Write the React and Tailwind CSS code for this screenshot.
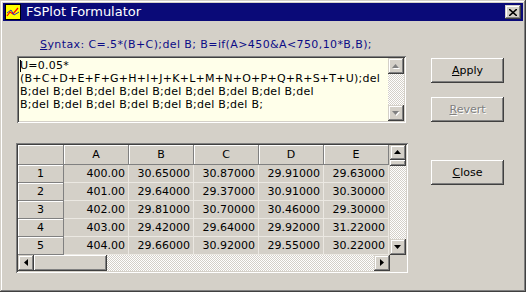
import React from 'react';

// FSPlot Formulator - classic Windows dialog
const raised =
    'shadow-[inset_-1px_-1px_#404040,inset_1px_1px_#ffffff,inset_-2px_-2px_#808080,inset_2px_2px_#d4d0c8]';
const scrollBtn =
    'shadow-[inset_-1px_-1px_#404040,inset_1px_1px_#d4d0c8,inset_-2px_-2px_#808080,inset_2px_2px_#ffffff]';
const sunken =
    'shadow-[inset_1px_1px_#808080,inset_-1px_-1px_#ffffff,inset_2px_2px_#404040,inset_-2px_-2px_#d4d0c8]';
const track =
    'bg-[image:repeating-conic-gradient(#ffffff_0%_25%,#d4d0c8_0%_50%)] bg-[length:2px_2px]';

const Arrow = ({ dir, gray }) => {
    const pts = {
        up: '3.5,0 7,4 0,4',
        down: '0,0 7,0 3.5,4',
        left: '4,0 4,7 0,3.5',
        right: '0,0 4,3.5 0,7',
    }[dir];
    const vertical = dir === 'up' || dir === 'down';
    return (
        <svg width={vertical ? 8 : 5} height={vertical ? 5 : 8} className="block">
            {gray && (
                <polygon points={pts} fill="#ffffff" transform="translate(1,1)" />
            )}
            <polygon points={pts} fill={gray ? '#808080' : '#000000'} />
        </svg>
    );
};

const ScrollButton = ({ dir, gray, className = '' }) => (
    <div className={`bg-[#d4d0c8] flex items-center justify-center ${scrollBtn} ${className}`}>
        <Arrow dir={dir} gray={gray} />
    </div>
);

const AppIcon = () => (
    <svg width="16" height="16" viewBox="0 0 16 16" className="block">
        <rect x="0.5" y="0.5" width="15" height="15" fill="#ffff00" stroke="#000000" />
        <polyline points="2,12 5,8 8,10 13,4" fill="none" stroke="#ff0000" strokeWidth="1.2" />
        <polyline points="2,9 6,6 9,11 14,8" fill="none" stroke="#3030c0" strokeWidth="1" />
    </svg>
);

const formulaLines = [
    'U=0.05*',
    '(B+C+D+E+F+G+H+I+J+K+L+M+N+O+P+Q+R+S+T+U);del',
    'B;del B;del B;del B;del B;del B;del B;del B;del B;del',
    'B;del B;del B;del B;del B;del B;del B;del B;',
];

const columns = ['A', 'B', 'C', 'D', 'E'];
const rows = [
    ['1', '400.00', '30.65000', '30.87000', '29.91000', '29.63000'],
    ['2', '401.00', '29.64000', '29.37000', '30.91000', '30.30000'],
    ['3', '402.00', '29.81000', '30.70000', '30.46000', '29.30000'],
    ['4', '403.00', '29.42000', '29.64000', '29.92000', '31.22000'],
    ['5', '404.00', '29.66000', '30.92000', '29.55000', '30.22000'],
];

const fixedCell =
    'bg-[#d4d0c8] border-r border-b border-[#808080] shadow-[inset_1px_1px_#ffffff] flex items-center justify-center';

const DialogButton = ({ children, disabled }) => (
    <div
        className={`w-[73px] h-[25px] bg-[#d4d0c8] flex items-center justify-center ${raised} ${
            disabled ? 'text-[#808080] [text-shadow:1px_1px_#ffffff]' : 'text-black'
        }`}
    >
        {children}
    </div>
);

export default function App() {
    return (
        <div className="w-[526px] h-[292px] bg-[#d4d0c8] p-[3px] flex flex-col shadow-[inset_-1px_-1px_#404040,inset_1px_1px_#d4d0c8,inset_-2px_-2px_#808080,inset_2px_2px_#ffffff] font-['DejaVu_Sans',sans-serif] text-[11px] leading-[13px] text-black overflow-hidden">
            {/* Title bar */}
            <div className="h-[18px] bg-[#0a0a78] flex items-center pl-[2px] pr-[2px]">
                <AppIcon />
                <span className="ml-[5px] text-white text-[13px] leading-[16px]">FSPlot Formulator</span>
                <div className={`ml-auto w-[16px] h-[14px] bg-[#d4d0c8] flex items-center justify-center ${scrollBtn}`}>
                    <svg width="8" height="7" className="block">
                        <path d="M0,0 L8,7 M8,0 L0,7" stroke="#000" strokeWidth="1.6" />
                    </svg>
                </div>
            </div>

            {/* Body */}
            <div className="flex flex-1 pl-[13px]">
                {/* Left column */}
                <div className="w-[392px] flex flex-col">
                    <div className="ml-[24px] mt-[17px] text-[#0c0c86] whitespace-nowrap tracking-[0.4px]">
                        <span className="underline">S</span>yntax: C=.5*(B+C);del B; B=if(A&gt;450&amp;A&lt;750,10*B,B);
                    </div>

                    {/* Formula editor */}
                    <div className={`ml-[1px] mt-[5px] w-[389px] h-[67px] p-[2px] ${sunken}`}>
                        <div className="w-full h-full bg-[#ffffea] flex">
                            <div className="flex-1 pl-[1px] pt-[1px] whitespace-pre relative tracking-[0.25px]">
                                <span className="absolute left-[1px] top-[2px] w-[1px] h-[12px] bg-black" />
                                {formulaLines.map((line, i) => (
                                    <div key={i}>{line}</div>
                                ))}
                            </div>
                            <div className="w-[16px] flex flex-col">
                                <ScrollButton dir="up" gray className="h-[16px]" />
                                <div className={`flex-1 ${track}`} />
                                <ScrollButton dir="down" gray className="h-[16px]" />
                            </div>
                        </div>
                    </div>

                    {/* Data grid */}
                    <div className={`mt-[20px] w-[392px] h-[130px] p-[2px] ${sunken}`}>
                        <div className="w-full h-full bg-[#d4d0c8] flex">
                            <div className="flex-1 flex flex-col">
                                <div className="flex-1">
                                    <div className="flex h-[20px]">
                                        <div className={`w-[46px] ${fixedCell}`} />
                                        {columns.map((c) => (
                                            <div key={c} className={`w-[65px] ${fixedCell}`}>
                                                {c}
                                            </div>
                                        ))}
                                    </div>
                                    {rows.map((row) => (
                                        <div key={row[0]} className="flex h-[18px]">
                                            <div className={`w-[46px] ${fixedCell}`}>{row[0]}</div>
                                            {row.slice(1).map((v, i) => (
                                                <div
                                                    key={i}
                                                    className="w-[65px] border-r border-b border-[#ebe8e2] flex items-center justify-end pr-[3px]"
                                                >
                                                    {v}
                                                </div>
                                            ))}
                                        </div>
                                    ))}
                                </div>
                                {/* Horizontal scrollbar */}
                                <div className="h-[16px] flex">
                                    <ScrollButton dir="left" className="w-[16px]" />
                                    <div className={`w-[73px] ${raised} bg-[#d4d0c8]`} />
                                    <div className={`flex-1 ${track}`} />
                                    <ScrollButton dir="right" className="w-[16px]" />
                                </div>
                            </div>
                            {/* Vertical scrollbar */}
                            <div className="w-[16px] flex flex-col">
                                <ScrollButton dir="up" className="h-[15px]" />
                                <div className={`h-[6px] ${raised} bg-[#d4d0c8]`} />
                                <div className={`flex-1 ${track}`} />
                                <ScrollButton dir="down" className="h-[16px]" />
                                <div className="h-[16px] bg-[#d4d0c8]" />
                            </div>
                        </div>
                    </div>
                </div>

                {/* Right column: buttons */}
                <div className="ml-[23px] flex flex-col">
                    <div className="mt-[37px]">
                        <DialogButton>
                            <span>
                                <span className="underline">A</span>pply
                            </span>
                        </DialogButton>
                    </div>
                    <div className="mt-[14px]">
                        <DialogButton disabled>
                            <span>
                                <span className="underline">R</span>evert
                            </span>
                        </DialogButton>
                    </div>
                    <div className="mt-[38px]">
                        <DialogButton>
                            <span>
                                <span className="underline">C</span>lose
                            </span>
                        </DialogButton>
                    </div>
                </div>
            </div>
        </div>
    );
}
